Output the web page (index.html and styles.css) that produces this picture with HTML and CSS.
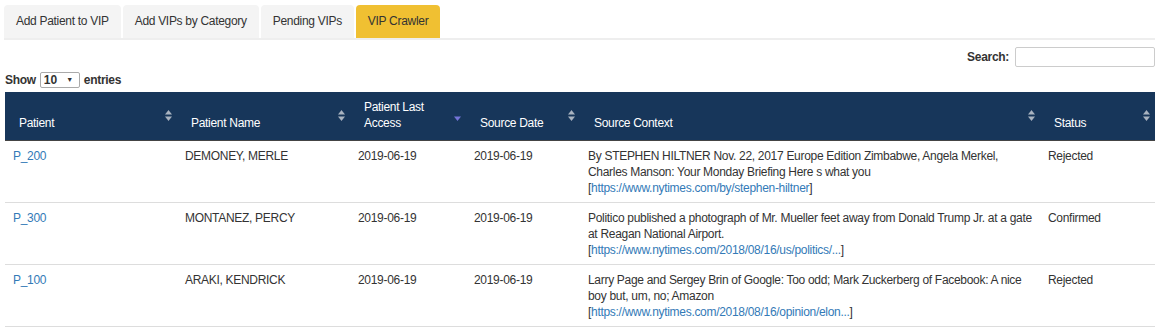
FILE: index.html
```html
<!DOCTYPE html>
<html lang="en">

<head>
  <meta charset="UTF-8" />
  <meta name="viewport" content="width=device-width, initial-scale=1.0" />
  <title>VIP Crawler</title>
  <link rel="stylesheet" href="styles.css">
</head>

<body>
  <div class="page">
    <ul class="tabs">
      <li class="tab">Add Patient to VIP</li>
      <li class="tab">Add VIPs by Category</li>
      <li class="tab">Pending VIPs</li>
      <li class="tab active">VIP Crawler</li>
    </ul>

    <div class="filter">
      <label>Search: <input type="text" class="search-input"></label>
    </div>

    <div class="length">
      Show
      <span class="select-wrap">
        <select class="length-select">
          <option>10</option>
          <option>25</option>
          <option>50</option>
        </select>
        <span class="select-arrow">&#9660;</span>
      </span>
      entries
    </div>

    <table class="vip-table">
      <colgroup>
        <col style="width:172px">
        <col style="width:173px">
        <col style="width:116px">
        <col style="width:114px">
        <col style="width:460px">
        <col style="width:115px">
      </colgroup>
      <thead>
        <tr>
          <th>Patient<span class="sort"><svg width="7" height="11" viewBox="0 0 7 11"><path d="M3.5 0 L7 4.5 H0 Z" fill="#a9b3c0"/><path d="M0 6.5 H7 L3.5 11 Z" fill="#a9b3c0"/></svg></span></th>
          <th>Patient Name<span class="sort"><svg width="7" height="11" viewBox="0 0 7 11"><path d="M3.5 0 L7 4.5 H0 Z" fill="#a9b3c0"/><path d="M0 6.5 H7 L3.5 11 Z" fill="#a9b3c0"/></svg></span></th>
          <th>Patient Last Access<span class="sort"><svg width="7" height="11" viewBox="0 0 7 11"><path d="M0 6.5 H7 L3.5 11 Z" fill="#7474d8"/></svg></span></th>
          <th>Source Date<span class="sort"><svg width="7" height="11" viewBox="0 0 7 11"><path d="M3.5 0 L7 4.5 H0 Z" fill="#a9b3c0"/><path d="M0 6.5 H7 L3.5 11 Z" fill="#a9b3c0"/></svg></span></th>
          <th>Source Context<span class="sort"><svg width="7" height="11" viewBox="0 0 7 11"><path d="M3.5 0 L7 4.5 H0 Z" fill="#a9b3c0"/><path d="M0 6.5 H7 L3.5 11 Z" fill="#a9b3c0"/></svg></span></th>
          <th>Status<span class="sort"><svg width="7" height="11" viewBox="0 0 7 11"><path d="M3.5 0 L7 4.5 H0 Z" fill="#a9b3c0"/><path d="M0 6.5 H7 L3.5 11 Z" fill="#a9b3c0"/></svg></span></th>
        </tr>
      </thead>
      <tbody>
        <tr>
          <td><a href="#">P_200</a></td>
          <td>DEMONEY, MERLE</td>
          <td>2019-06-19</td>
          <td>2019-06-19</td>
          <td>By STEPHEN HILTNER Nov. 22, 2017 Europe Edition Zimbabwe, Angela Merkel, Charles Manson: Your Monday Briefing Here s what you<br>[<a href="#">https://www.nytimes.com/by/stephen-hiltner</a>]</td>
          <td>Rejected</td>
        </tr>
        <tr>
          <td><a href="#">P_300</a></td>
          <td>MONTANEZ, PERCY</td>
          <td>2019-06-19</td>
          <td>2019-06-19</td>
          <td>Politico published a photograph of Mr. Mueller feet away from Donald Trump Jr. at a gate at Reagan National Airport.<br>[<a href="#">https://www.nytimes.com/2018/08/16/us/politics/...</a>]</td>
          <td>Confirmed</td>
        </tr>
        <tr>
          <td><a href="#">P_100</a></td>
          <td>ARAKI, KENDRICK</td>
          <td>2019-06-19</td>
          <td>2019-06-19</td>
          <td>Larry Page and Sergey Brin of Google: Too odd; Mark Zuckerberg of Facebook: A nice boy but, um, no; Amazon<br>[<a href="#">https://www.nytimes.com/2018/08/16/opinion/elon...</a>]</td>
          <td>Rejected</td>
        </tr>
      </tbody>
    </table>
  </div>
</body>

</html>
```

FILE: styles.css
```css
* {
  box-sizing: border-box;
}

body {
  margin: 0;
  background: #fff;
  font-family: "Liberation Sans", Arial, sans-serif;
  font-size: 12px;
  letter-spacing: -0.3px;
  color: #333;
}

.page {
  padding: 5px 5px 0 5px;
}

.tabs {
  list-style: none;
  margin: 0 0 0 -1px;
  padding: 0;
  display: flex;
  gap: 2px;
  border-bottom: 2px solid #eee;
}

.tab {
  height: 33px;
  line-height: 33px;
  padding: 0 12px;
  font-size: 12px;
  color: #333;
  background: #f4f4f4;
  border-radius: 4px 4px 0 0;
}

.tab.active {
  background: #f0c032;
}

.filter {
  display: flex;
  justify-content: flex-end;
  padding-top: 7px;
  font-weight: bold;
}

.filter label {
  display: flex;
  align-items: center;
}

.search-input {
  width: 140px;
  height: 20px;
  margin-left: 6px;
  border: 1px solid #ccc;
  border-radius: 2px;
  font-size: 12px;
}

.length {
  display: flex;
  align-items: center;
  margin-top: 5px;
  font-weight: bold;
  height: 15px;
}

.select-wrap {
  position: relative;
  display: inline-block;
  margin: 0 4px;
}

.length-select {
  appearance: none;
  -webkit-appearance: none;
  width: 40px;
  height: 16px;
  padding: 0 0 0 3px;
  border: 1px solid #aaa;
  border-radius: 2px;
  background: #fff;
  font-family: inherit;
  font-size: 12px;
  font-weight: bold;
  color: #333;
  display: block;
}

.select-arrow {
  position: absolute;
  right: 7px;
  top: 4px;
  font-size: 7px;
  color: #333;
  pointer-events: none;
}

.vip-table {
  width: 1150px;
  margin-top: 5px;
  border-collapse: collapse;
  table-layout: fixed;
}

.vip-table thead th {
  position: relative;
  background: #17365a;
  color: #fff;
  font-weight: normal;
  text-align: left;
  vertical-align: bottom;
  line-height: 16px;
  padding: 7px 24px 9px 14px;
  border-bottom: 1px solid #444;
}

.sort {
  position: absolute;
  right: 5px;
  top: 50%;
  margin-top: -6px;
  line-height: 0;
}

.vip-table tbody td {
  vertical-align: top;
  line-height: 16px;
  padding: 7px 8px 6px 8px;
  border-bottom: 1px solid #ddd;
}

.vip-table a {
  color: #337ab7;
  text-decoration: none;
}
```
